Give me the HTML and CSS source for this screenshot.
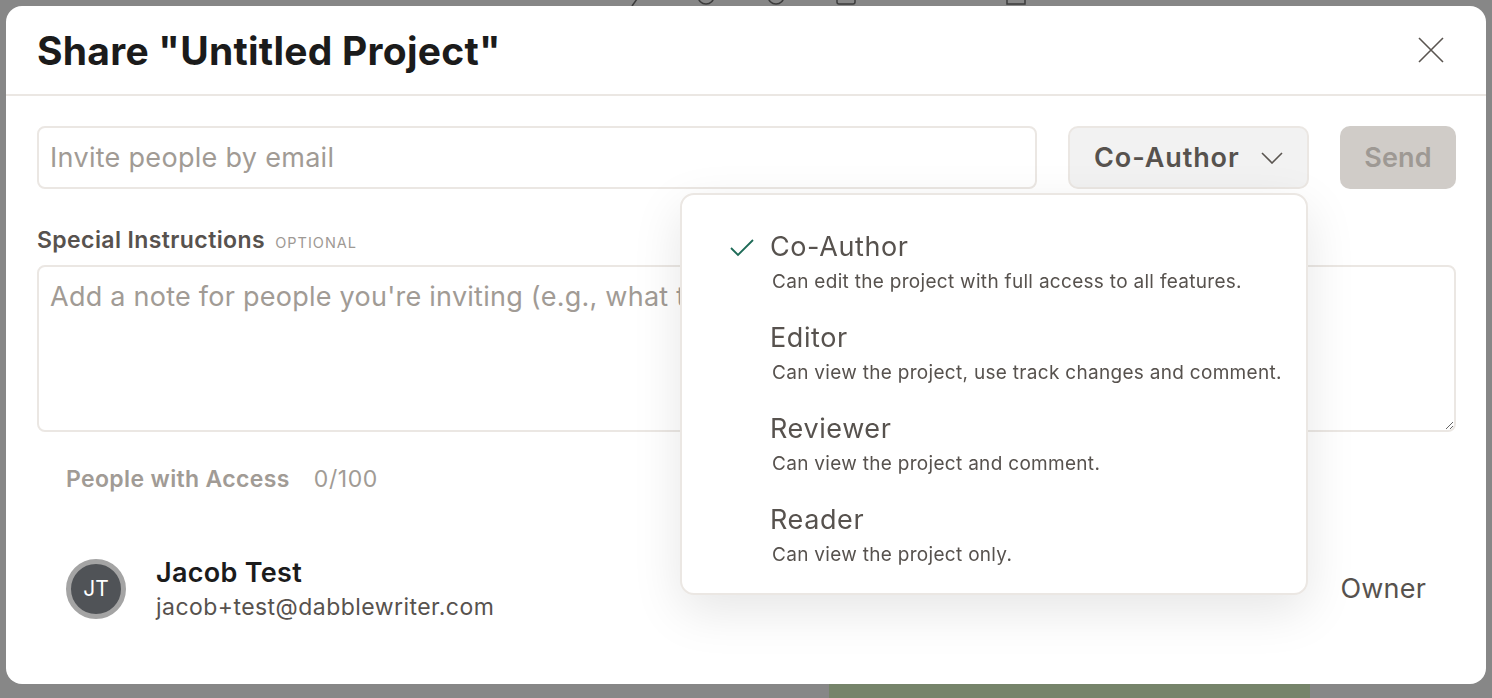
FILE: index.html
```html
<!DOCTYPE html>
<html lang="en">
<head>
    <meta charset="UTF-8">
    <meta name="viewport" content="width=device-width, initial-scale=1.0">
    <title>Share "Untitled Project"</title>
    <link rel="stylesheet" href="styles.css">
</head>
<body>
    <!-- page behind the dialog -->
    <div class="page">
        <div class="page-toolbar">
            <svg class="tool" width="20" height="20" viewBox="0 0 20 20"><path d="M4 18 L14 4"/></svg>
            <svg class="tool" width="24" height="20" viewBox="0 0 24 20"><circle cx="12" cy="8" r="8"/></svg>
            <svg class="tool" width="24" height="20" viewBox="0 0 24 20"><circle cx="12" cy="8" r="8"/></svg>
            <svg class="tool" width="24" height="20" viewBox="0 0 24 20"><rect x="3" y="0" width="18" height="16" rx="2"/></svg>
            <svg class="tool tool-wide" width="24" height="20" viewBox="0 0 24 20"><path d="M3 0 H15 L21 8 V16 H3 Z"/></svg>
        </div>
        <div class="page-footer">
            <div class="page-card"></div>
        </div>
    </div>

    <div class="overlay">
        <div class="modal">
            <div class="modal-header">
                <h1>Share "Untitled Project"</h1>
                <button class="close-btn" aria-label="Close">
                    <svg width="26" height="26" viewBox="0 0 26 26"><path d="M1 1 L25 25 M25 1 L1 25"/></svg>
                </button>
            </div>

            <div class="modal-body">
                <div class="invite-row">
                    <input type="text" class="invite-input" placeholder="Invite people by email">
                    <div class="role-wrap">
                        <button class="role-select">
                            <span>Co-Author</span>
                            <svg width="22" height="12" viewBox="0 0 22 12"><path d="M1 1 L11 11 L21 1"/></svg>
                        </button>

                        <ul class="role-menu">
                            <li class="role-item selected">
                                <svg class="check" width="24" height="18" viewBox="0 0 24 18"><path d="M1 9 L8 16 L23 1"/></svg>
                                <div class="role-title">Co-Author</div>
                                <div class="role-desc">Can edit the project with full access to all features.</div>
                            </li>
                            <li class="role-item">
                                <div class="role-title">Editor</div>
                                <div class="role-desc">Can view the project, use track changes and comment.</div>
                            </li>
                            <li class="role-item">
                                <div class="role-title">Reviewer</div>
                                <div class="role-desc">Can view the project and comment.</div>
                            </li>
                            <li class="role-item">
                                <div class="role-title">Reader</div>
                                <div class="role-desc">Can view the project only.</div>
                            </li>
                        </ul>
                    </div>
                    <button class="send-btn" disabled>Send</button>
                </div>

                <label class="field-label">Special Instructions <span class="optional">OPTIONAL</span></label>
                <textarea class="note-input" placeholder="Add a note for people you're inviting (e.g., what to focus on or any deadlines)"></textarea>

                <div class="access-head">
                    <span class="access-title">People with Access</span>
                    <span class="access-count">0/100</span>
                </div>

                <div class="person">
                    <div class="avatar">JT</div>
                    <div class="person-info">
                        <div class="person-name">Jacob Test</div>
                        <div class="person-email">jacob+test@dabblewriter.com</div>
                    </div>
                    <div class="person-role">Owner</div>
                </div>
            </div>
        </div>
    </div>
</body>
</html>
```

FILE: styles.css
```css
body {
    margin: 0;
    height: 698px;
    overflow: hidden;
    font-family: 'Inter', 'Liberation Sans', sans-serif;
    background-color: #878787;
    color: #57524e;
}
.page {
    height: 100%;
    display: flex;
    flex-direction: column;
    justify-content: space-between;
}
.page-toolbar {
    display: flex;
    gap: 46px;
    padding-left: 628px;
    margin-top: -12px;
}
.tool {
    fill: none;
    stroke: #3c3c3c;
    stroke-width: 1.5;
}
.tool-wide {
    margin-left: 100px;
}
.page-footer {
    display: flex;
    padding-left: 829px;
}
.page-card {
    width: 481px;
    height: 14px;
    background-color: #76846a;
}
.overlay {
    position: fixed;
    inset: 0;
    padding: 6px;
    display: flex;
}
.modal {
    flex: 1;
    background-color: #ffffff;
    border-radius: 16px;
    display: flex;
    flex-direction: column;
    height: 678px;
    box-sizing: border-box;
}
.modal-header {
    display: flex;
    align-items: center;
    justify-content: space-between;
    height: 90px;
    padding: 0 42px 0 31px;
    border-bottom: 2px solid #ebe7e3;
    box-sizing: border-box;
}
.modal-header h1 {
    margin: 0;
    font-size: 39px;
    font-weight: 700;
    color: #1b1b1b;
    letter-spacing: 0.25px;
}
.close-btn {
    border: none;
    background: none;
    padding: 0;
    display: flex;
}
.close-btn svg path {
    stroke: #5a5550;
    stroke-width: 1.6;
    fill: none;
}
.modal-body {
    padding: 30px 30px 0 31px;
}
.invite-row {
    display: flex;
    gap: 31px;
    height: 63px;
}
.invite-input {
    flex: 1;
    border: 2px solid #ebe7e3;
    border-radius: 8px;
    padding: 0 11px;
    font-family: inherit;
    font-size: 27px;
    letter-spacing: 0.3px;
    color: #57524e;
    outline: none;
}
.invite-input::placeholder,
.note-input::placeholder {
    color: #a19b95;
}
.role-wrap {
    position: relative;
    display: flex;
}
.role-select {
    width: 241px;
    display: flex;
    align-items: center;
    justify-content: space-between;
    padding: 0 24px 0 24px;
    background-color: #f2f2f2;
    border: 2px solid #ebe7e3;
    border-radius: 10px;
    font-family: inherit;
    font-size: 27px;
    font-weight: 600;
    letter-spacing: 0.9px;
    color: #57524e;
}
.role-select svg path {
    stroke: #5a5550;
    stroke-width: 1.6;
    fill: none;
}
.send-btn {
    width: 116px;
    border: none;
    border-radius: 10px;
    background-color: #d0ccc8;
    color: #9e9994;
    font-family: inherit;
    font-size: 27px;
    font-weight: 600;
    letter-spacing: 0.2px;
}
.role-menu {
    position: absolute;
    top: 67px;
    right: 1px;
    width: 628px;
    margin: 0;
    padding: 36px 0 26px 0;
    list-style: none;
    background-color: #ffffff;
    border: 2px solid #ebe7e3;
    border-radius: 14px;
    box-sizing: border-box;
    box-shadow: 0 16px 50px rgba(0, 0, 0, 0.10);
    display: flex;
    flex-direction: column;
    gap: 28px;
    z-index: 2;
}
.role-item {
    position: relative;
    padding-left: 88px;
}
.check {
    position: absolute;
    left: 48px;
    top: 8px;
}
.check path {
    stroke: #1e6b57;
    stroke-width: 1.8;
    fill: none;
}
.role-title {
    font-size: 27px;
    line-height: 32px;
    letter-spacing: 0.6px;
    color: #57524e;
}
.role-desc {
    margin-top: 7px;
    padding-left: 2px;
    font-size: 19px;
    line-height: 24px;
    letter-spacing: 0.3px;
    color: #57524e;
}
.field-label {
    display: block;
    margin-top: 37px;
    font-size: 23px;
    font-weight: 600;
    letter-spacing: 0.4px;
    color: #57524e;
}
.optional {
    margin-left: 4px;
    font-size: 14.5px;
    font-weight: 400;
    letter-spacing: 1px;
    color: #9e9994;
}
.note-input {
    display: block;
    box-sizing: border-box;
    width: 100%;
    height: 167px;
    margin-top: 11px;
    border: 2px solid #ebe7e3;
    border-radius: 8px;
    padding: 13px 11px;
    font-family: inherit;
    font-size: 27px;
    letter-spacing: 0.25px;
    color: #57524e;
    outline: none;
}
.access-head {
    display: flex;
    gap: 24px;
    padding-left: 29px;
    margin-top: 33px;
    font-size: 23px;
    letter-spacing: 0.35px;
    color: #a19b95;
}
.access-title {
    font-weight: 600;
}
.access-count {
    letter-spacing: 0.6px;
}
.person {
    display: flex;
    align-items: center;
    gap: 30px;
    padding: 0 30px 0 29px;
    margin-top: 63px;
}
.avatar {
    width: 50px;
    height: 50px;
    border-radius: 50%;
    border: 5px solid #a4a4a4;
    background-color: #505357;
    color: #ffffff;
    font-size: 21px;
    display: flex;
    align-items: center;
    justify-content: center;
}
.person-info {
    flex: 1;
}
.person-name {
    font-size: 27px;
    font-weight: 600;
    letter-spacing: 0.3px;
    color: #1b1b1b;
}
.person-email {
    margin-top: 4px;
    font-size: 23px;
    letter-spacing: 0.45px;
    color: #57524e;
}
.person-role {
    font-size: 27px;
    letter-spacing: 0.2px;
    color: #57524e;
}
```
